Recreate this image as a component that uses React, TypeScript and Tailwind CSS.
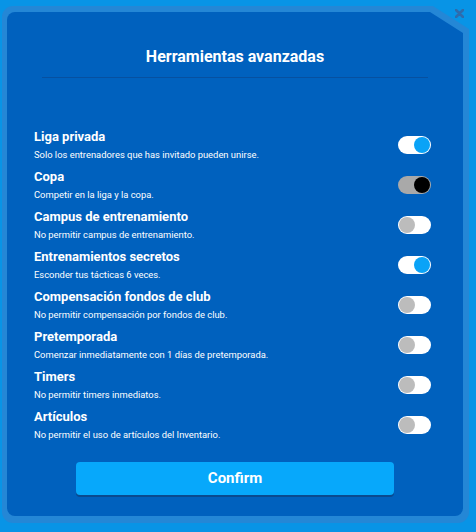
import React from "react";

type Row = { title: string; desc: string; state: "on" | "off" | "dark" };

const rows: Row[] = [
  { title: "Liga privada", desc: "Solo los entrenadores que has invitado pueden unirse.", state: "on" },
  { title: "Copa", desc: "Competir en la liga y la copa.", state: "dark" },
  { title: "Campus de entrenamiento", desc: "No permitir campus de entrenamiento.", state: "off" },
  { title: "Entrenamientos secretos", desc: "Esconder tus tácticas 6 veces.", state: "on" },
  { title: "Compensación fondos de club", desc: "No permitir compensación por fondos de club.", state: "off" },
  { title: "Pretemporada", desc: "Comenzar inmediatamente con 1 días de pretemporada.", state: "off" },
  { title: "Timers", desc: "No permitir timers inmediatos.", state: "off" },
  { title: "Artículos", desc: "No permitir el uso de artículos del Inventario.", state: "off" },
];

function Toggle({ state }: { state: Row["state"] }) {
  if (state === "on") {
    return (
      <div className="w-[33px] h-[18px] rounded-full bg-white flex items-center justify-end px-[1px]">
        <div className="w-[16px] h-[16px] rounded-full bg-[#0aa3f7]" />
      </div>
    );
  }
  if (state === "dark") {
    return (
      <div className="w-[33px] h-[18px] rounded-full bg-[#a9a9a9] flex items-center justify-end px-[1px]">
        <div className="w-[16px] h-[16px] rounded-full bg-black" />
      </div>
    );
  }
  return (
    <div className="w-[33px] h-[18px] rounded-full bg-white flex items-center justify-start px-[1px]">
      <div className="w-[16px] h-[16px] rounded-full bg-[#bcbcbc]" />
    </div>
  );
}

export default function App() {
  return (
    <div
      className="relative w-[476px] h-[532px] bg-[#0894e6] overflow-hidden"
      style={{ fontFamily: "Roboto, 'Liberation Sans', sans-serif" }}
    >
      <div className="absolute left-[455px] top-[9px] w-[9px] h-[9px]">
        <svg viewBox="0 0 9 9" width="9" height="9">
          <path d="M1 1 L8 8 M8 1 L1 8" stroke="#2e6cad" strokeWidth="2.6" strokeLinecap="round" />
        </svg>
      </div>
      <div
        className="ml-[2px] mt-[6px] w-[467px] h-[517px] rounded-[11px] bg-[#2487d6] pl-[5px] pt-[6px] pr-[6px] pb-[7px]"
        style={{ clipPath: "polygon(0 0, 431px 0, 467px 23px, 467px 100%, 0 100%)" }}
      >
        <div
          className="w-full h-full rounded-[8px] bg-[#0061be] flex flex-col"
          style={{ clipPath: "polygon(0 0, 423px 0, 456px 21px, 456px 100%, 0 100%)" }}
        >
          <div className="pt-[35px] text-center text-white font-bold text-[16px] leading-[20px]">
            Herramientas avanzadas
          </div>
          <div className="mt-[10px] mx-[35px] h-[1px] bg-[#0650a0]" />
          <div className="mt-[47px] flex flex-col">
            {rows.map((r) => (
              <div key={r.title} className="h-[40px] flex items-center justify-between pl-[27px] pr-[32px]">
                <div className="flex flex-col gap-[3px]">
                  <div className="text-white font-bold text-[13px] leading-[16px]">{r.title}</div>
                  <div className="text-white text-[9.4px] leading-[13px]">{r.desc}</div>
                </div>
                <Toggle state={r.state} />
              </div>
            ))}
          </div>
          <div className="mt-[17px] flex justify-center">
            <div className="w-[318px] h-[33px] rounded-[4px] bg-[#07a8fb] shadow-[0_2px_0_#0a4a8f] flex items-center justify-center text-white font-bold text-[15px]">
              Confirm
            </div>
          </div>
        </div>
      </div>
    </div>
  );
}
